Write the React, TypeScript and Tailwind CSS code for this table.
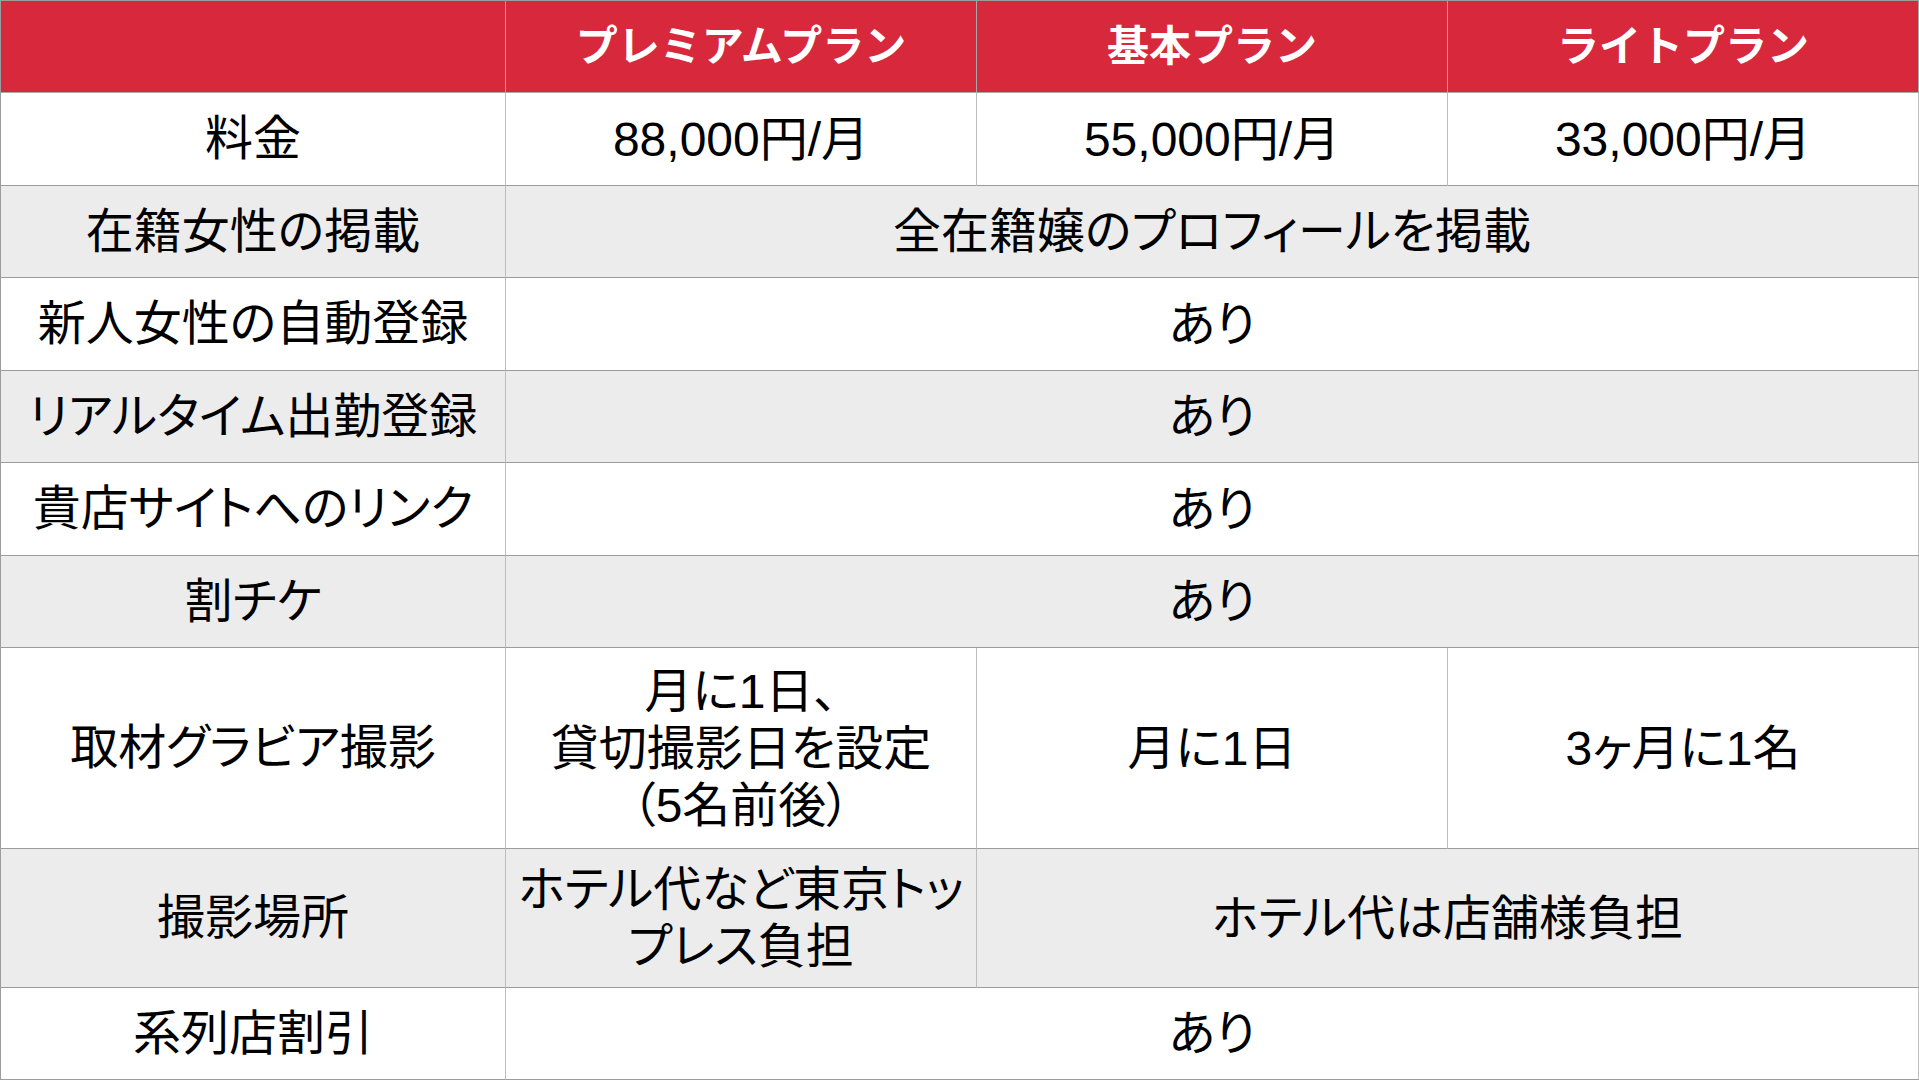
import React from "react"

type Cell = { text: React.ReactNode; span?: number }
type Row = { label: string; h: string; gray?: boolean; cells: Cell[] }

const ROWS: Row[] = [
  {
    label: "料金",
    h: "h-[93px]",
    cells: [{ text: "88,000円/月" }, { text: "55,000円/月" }, { text: "33,000円/月" }],
  },
  { label: "在籍女性の掲載", h: "h-[92px]", gray: true, cells: [{ text: "全在籍嬢のプロフィールを掲載", span: 3 }] },
  { label: "新人女性の自動登録", h: "h-[93px]", cells: [{ text: "あり", span: 3 }] },
  { label: "リアルタイム出勤登録", h: "h-[92px]", gray: true, cells: [{ text: "あり", span: 3 }] },
  { label: "貴店サイトへのリンク", h: "h-[93px]", cells: [{ text: "あり", span: 3 }] },
  { label: "割チケ", h: "h-[92px]", gray: true, cells: [{ text: "あり", span: 3 }] },
  {
    label: "取材グラビア撮影",
    h: "h-[201px]",
    cells: [
      {
        text: (
          <>
            月に1日、
            <br />
            貸切撮影日を設定
            <br />
            （5名前後）
          </>
        ),
      },
      { text: "月に1日" },
      { text: "3ヶ月に1名" },
    ],
  },
  {
    label: "撮影場所",
    h: "h-[139px]",
    gray: true,
    cells: [
      {
        text: (
          <>
            ホテル代など東京トッ
            <br />
            プレス負担
          </>
        ),
      },
      { text: "ホテル代は店舗様負担", span: 2 },
    ],
  },
  { label: "系列店割引", h: "h-[92px]", cells: [{ text: "あり", span: 3 }] },
]

const PLANS = ["プレミアムプラン", "基本プラン", "ライトプラン"]

export default function App() {
  return (
    <div
      className="w-[1919px] h-[1080px] overflow-hidden bg-white text-black"
      style={{ fontFamily: '"Liberation Sans", "Noto Sans CJK JP", sans-serif' }}
    >
      <div className="grid grid-cols-[505px_471px_471px_471px] border-t border-l border-[#9c9c9c]">
        {/* header */}
        <div className="h-[92px] bg-[#d7293b] border-r border-b border-[#a8a8a8]" />
        {PLANS.map((p) => (
          <div
            key={p}
            className="h-[92px] bg-[#d7293b] border-r border-b border-[#a8a8a8] flex items-center justify-center text-white text-[42px] font-bold"
          >
            {p}
          </div>
        ))}

        {ROWS.map((row) => (
          <React.Fragment key={row.label}>
            <div
              className={`${row.h} ${row.gray ? "bg-[#ececec]" : "bg-white"} border-b border-b-[#9c9c9c] border-r border-r-[#bdbdbd] flex items-center justify-center text-[48px] [font-feature-settings:'palt'] whitespace-nowrap`}
            >
              {row.label}
            </div>
            {row.cells.map((c, i) => (
              <div
                key={i}
                className={`${row.h} ${row.gray ? "bg-[#ececec]" : "bg-white"} ${
                  c.span === 3 ? "col-span-3" : c.span === 2 ? "col-span-2" : ""
                } border-b border-b-[#9c9c9c] border-r border-r-[#bdbdbd] flex items-center justify-center text-center text-[48px] leading-[57px] [font-feature-settings:'palt'] whitespace-nowrap`}
              >
                <div>{c.text}</div>
              </div>
            ))}
          </React.Fragment>
        ))}
      </div>
    </div>
  )
}
